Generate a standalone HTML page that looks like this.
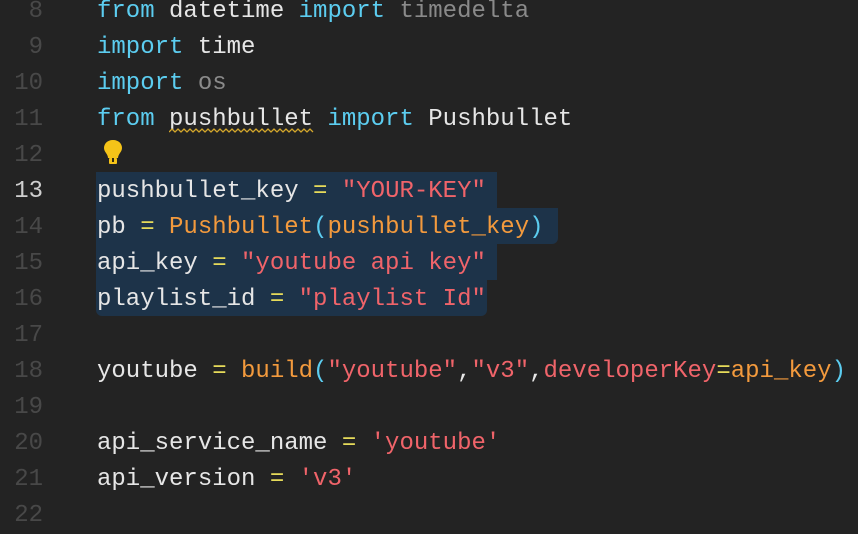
<!DOCTYPE html>
<html><head><style>
html,body{margin:0;padding:0;background:#232323;width:858px;height:512px;overflow:hidden}
.l{position:absolute;left:0;height:36px;width:858px;font-family:"Liberation Mono",monospace;font-size:24px;line-height:36px;white-space:pre}
.t{position:absolute;top:2px;left:0;width:858px;height:36px}
.n{position:absolute;left:0;width:43px;text-align:right;color:#484848}
.c{position:absolute;left:97px;color:#e6e6e6}
.k{color:#5ccdf0}.o{color:#e6db5a}.s{color:#f0646a}.f{color:#f39a3d}.g{color:#8a8a8a}.p{color:#5ccdf0}
.sel{position:absolute;left:96px;background:#1d3349;height:36px}
</style></head><body>
<div class="sel" style="top:172px;width:401px"></div>
<div class="sel" style="top:208px;width:462px;border-radius:0 0 6px 0"></div>
<div class="sel" style="top:244px;width:401px"></div>
<div class="sel" style="top:280px;width:391px;border-radius:0 0 6px 6px"></div>
<div class="t">
<div class="l" style="top:-8px"><span class="n">8</span><span class="c"><span class="k">from</span> datetime <span class="k">import</span> <span class="g">timedelta</span></span></div>
<div class="l" style="top:28px"><span class="n">9</span><span class="c"><span class="k">import</span> time</span></div>
<div class="l" style="top:64px"><span class="n">10</span><span class="c"><span class="k">import</span> <span class="g">os</span></span></div>
<div class="l" style="top:100px"><span class="n">11</span><span class="c"><span class="k">from</span> pushbullet <span class="k">import</span> Pushbullet</span></div>
<div class="l" style="top:136px"><span class="n">12</span></div>
<div class="l" style="top:172px"><span class="n" style="color:#cfcfcf">13</span><span class="c">pushbullet_key <span class="o">=</span> <span class="s">"YOUR-KEY"</span></span></div>
<div class="l" style="top:208px"><span class="n">14</span><span class="c">pb <span class="o">=</span> <span class="f">Pushbullet</span><span class="p">(</span><span class="f">pushbullet_key</span><span class="p">)</span></span></div>
<div class="l" style="top:244px"><span class="n">15</span><span class="c">api_key <span class="o">=</span> <span class="s">"youtube api key"</span></span></div>
<div class="l" style="top:280px"><span class="n">16</span><span class="c">playlist_id <span class="o">=</span> <span class="s">"playlist Id"</span></span></div>
<div class="l" style="top:316px"><span class="n">17</span></div>
<div class="l" style="top:352px"><span class="n">18</span><span class="c">youtube <span class="o">=</span> <span class="f">build</span><span class="p">(</span><span class="s">"youtube"</span>,<span class="s">"v3"</span>,<span class="s">developerKey</span><span class="o">=</span><span class="f">api_key</span><span class="p">)</span></span></div>
<div class="l" style="top:388px"><span class="n">19</span></div>
<div class="l" style="top:424px"><span class="n">20</span><span class="c">api_service_name <span class="o">=</span> <span class="s">'youtube'</span></span></div>
<div class="l" style="top:460px"><span class="n">21</span><span class="c">api_version <span class="o">=</span> <span class="s">'v3'</span></span></div>
<div class="l" style="top:496px"><span class="n">22</span></div>
</div>
<svg style="position:absolute;left:169px;top:128px" width="145" height="6"><path d="M0 4 L3 1 L6 4 L9 1 L12 4 L15 1 L18 4 L21 1 L24 4 L27 1 L30 4 L33 1 L36 4 L39 1 L42 4 L45 1 L48 4 L51 1 L54 4 L57 1 L60 4 L63 1 L66 4 L69 1 L72 4 L75 1 L78 4 L81 1 L84 4 L87 1 L90 4 L93 1 L96 4 L99 1 L102 4 L105 1 L108 4 L111 1 L114 4 L117 1 L120 4 L123 1 L126 4 L129 1 L132 4 L135 1 L138 4 L141 1 L144 4" stroke="#d4a72c" stroke-width="1.3" fill="none"/></svg>
<svg style="position:absolute;left:102px;top:139px" width="22" height="26"><path d="M11 1 C5 1 2 5 2 9 C2 13 6 15 6 19 L16 19 C16 15 20 13 20 9 C20 5 17 1 11 1Z" fill="#f5c318"/><rect x="7" y="19" width="8" height="6" rx="1" fill="#f5c318"/><rect x="10" y="19" width="2" height="4" fill="#332a10"/></svg>
</body></html>
